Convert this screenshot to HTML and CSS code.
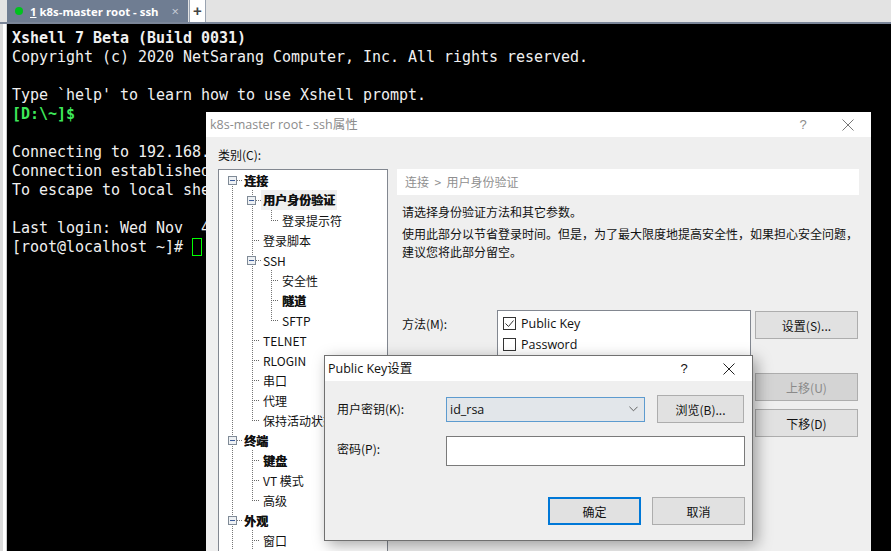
FILE: index.html
```html
<!DOCTYPE html>
<html lang="zh">
<head>
<meta charset="utf-8">
<title>Xshell</title>
<link rel="stylesheet" href="styles.css">
</head>
<body>
<div class="app">
  <div class="tabbar">
    <div class="tab"><span class="dot"></span><span class="tab-title"><u>1</u> k8s-master root - ssh</span><span class="tab-x">×</span></div>
    <div class="tab-add">+</div>
  </div>
  <div class="main">
    <div class="rail"></div>
    <div class="term">
      <div class="ln b">Xshell 7 Beta (Build 0031)</div>
      <div class="ln">Copyright (c) 2020 NetSarang Computer, Inc. All rights reserved.</div>
      <div class="ln">&nbsp;</div>
      <div class="ln">Type `help' to learn how to use Xshell prompt.</div>
      <div class="ln b g">[D:\~]$</div>
      <div class="ln">&nbsp;</div>
      <div class="ln">Connecting to 192.168.1.1:22...</div>
      <div class="ln">Connection established.</div>
      <div class="ln">To escape to local shell, press 'Ctrl+Alt+]'.</div>
      <div class="ln">&nbsp;</div>
      <div class="ln">Last login: Wed Nov  4 10:12:33 2020</div>
      <div class="ln">[root@localhost ~]# <span class="cursor"></span></div>
    </div>
  </div>

  <section class="win props">
    <header class="titlebar dim">
      <span class="title">k8s-master root - ssh属性</span>
      <span class="help">?</span>
      <svg class="close" viewBox="0 0 12 12"><path d="M.5.5l11 11M11.5.5l-11 11"/></svg>
    </header>
    <div class="props-body">
      <div class="cat">
        <div class="cat-label">类别(C):</div>
        <div class="tree">
          <div class="node l0 first b"><i class="box"></i><span>连接</span></div>
          <div class="node l1 b sel"><i class="box"></i><span>用户身份验证</span></div>
          <div class="node l2 end"><i class="dots"></i><span>登录提示符</span></div>
          <div class="node l1"><i class="dots"></i><span>登录脚本</span></div>
          <div class="node l1"><i class="box"></i><span>SSH</span></div>
          <div class="node l2"><i class="dots"></i><span>安全性</span></div>
          <div class="node l2 b"><i class="dots"></i><span>隧道</span></div>
          <div class="node l2 end"><i class="dots"></i><span>SFTP</span></div>
          <div class="node l1"><i class="dots"></i><span>TELNET</span></div>
          <div class="node l1"><i class="dots"></i><span>RLOGIN</span></div>
          <div class="node l1"><i class="dots"></i><span>串口</span></div>
          <div class="node l1"><i class="dots"></i><span>代理</span></div>
          <div class="node l1 end"><i class="dots"></i><span>保持活动状态</span></div>
          <div class="node l0 b"><i class="box"></i><span>终端</span></div>
          <div class="node l1 b"><i class="dots"></i><span>键盘</span></div>
          <div class="node l1"><i class="dots"></i><span>VT 模式</span></div>
          <div class="node l1 end"><i class="dots"></i><span>高级</span></div>
          <div class="node l0 b"><i class="box"></i><span>外观</span></div>
          <div class="node l1"><i class="dots"></i><span>窗口</span></div>
        </div>
      </div>
      <div class="pane">
        <div class="crumb">连接&nbsp; &gt; &nbsp;用户身份验证</div>
        <p class="p1">请选择身份验证方法和其它参数。</p>
        <p class="p2">使用此部分以节省登录时间。但是，为了最大限度地提高安全性，如果担心安全问题，<br>建议您将此部分留空。</p>
        <div class="method">
          <div class="method-label">方法(M):</div>
          <div class="listbox">
            <div class="opt"><svg class="chk" viewBox="0 0 13 13"><rect x=".5" y=".5" width="12" height="12"/><path d="M2.5 6.5l3 3 5-6"/></svg>Public Key</div>
            <div class="opt"><svg class="chk" viewBox="0 0 13 13"><rect x=".5" y=".5" width="12" height="12"/></svg>Password</div>
          </div>
          <div class="side">
            <button class="btn">设置(S)...</button>
            <button class="btn off">上移(U)</button>
            <button class="btn">下移(D)</button>
          </div>
        </div>
      </div>
    </div>
  </section>

  <section class="win pk">
    <header class="titlebar">
      <span class="title">Public Key设置</span>
      <span class="help">?</span>
      <svg class="close" viewBox="0 0 12 12"><path d="M.5.5l11 11M11.5.5l-11 11"/></svg>
    </header>
    <div class="pk-body">
      <div class="pk-grid">
        <label class="lab">用户密钥(K):</label>
        <div class="combo"><span>id_rsa</span><svg class="chev" viewBox="0 0 10 6"><path d="M.5.500L5 5 9.500.5"/></svg></div>
        <button class="btn browse">浏览(B)...</button>
        <label class="lab lab-pw">密码(P):</label>
        <div class="input"></div>
      </div>
      <div class="pk-foot">
        <button class="btn act primary">确定</button>
        <button class="btn act">取消</button>
      </div>
    </div>
  </section>
</div>
</body>
</html>
```

FILE: styles.css
```css
* { box-sizing: border-box; }
html, body { margin: 0; height: 100%; overflow: hidden; }
body { font-family: "Liberation Sans", "Noto Sans CJK SC", sans-serif; }
.app { position: relative; width: 891px; height: 551px; overflow: hidden; background: #000; display: flex; flex-direction: column; }

.tabbar { flex: 0 0 24px; display: flex; background: #e3e3e3; padding-left: 7px; border-bottom: 2px solid #7b8699; align-items: stretch; }
.tab { width: 181px; background: #6f7d92; padding-left: 8px; display: flex; align-items: center; color: #fff; font: 700 11.4px "Open Sans", "Noto Sans CJK SC", sans-serif; }
.dot { width: 8px; height: 8px; border-radius: 50%; background: #00c21e; margin-right: 7px; }
.tab-title { flex: 1; white-space: nowrap; }
.tab-x { color: #c8ced8; font-size: 13px; font-weight: 400; margin-right: 9px; }
.tab-add { width: 17px; margin-left: 1px; background: #fff; color: #444; border-left: 1px solid #9aa3b0; border-right: 1px solid #9aa3b0; text-align: center; font: 700 15px/21px "Liberation Sans", sans-serif; }

.main { flex: 1; display: flex; min-height: 0; }
.rail { flex: 0 0 7px; background: #fff; border-left: 3px solid #dcdcdc; border-right: 1px solid #ccc; }
.term { flex: 1; padding: 5px 0 0 5px; background: #000; color: #f0f0f0; font: 15px/19px "DejaVu Sans Mono", monospace; letter-spacing: -.03px; }
.ln { height: 19px; white-space: pre; }
.b { font-weight: 700; }
.g { color: #3ee85a; }
.cursor { display: inline-block; width: 10px; height: 18px; border: 1px solid #00ff00; vertical-align: -4px; }

.win { position: absolute; background: #efefef; display: flex; flex-direction: column; color: #111; font: 12px/18px "Noto Sans CJK SC", sans-serif; }
.props { left: 206px; top: 112px; width: 665px; height: 460px; }
.pk { left: 324px; top: 355px; width: 429px; height: 186px; border: 1px solid #707070; box-shadow: 4px 4px 14px rgba(0,0,0,.35); }

.titlebar { flex: 0 0 25px; background: #fff; display: flex; align-items: center; padding-left: 4px; }
.pk .titlebar { padding-left: 3px; }
.title { flex: 1; font: 12.5px/16px "Open Sans", "Noto Sans CJK SC", sans-serif; }
.titlebar.dim .title { color: #8c8c8c; }
.help { font: 13px/16px "Liberation Sans", sans-serif; width: 20px; text-align: center; margin-right: 29px; }
.titlebar.dim .help { color: #8c8c8c; }
.close { width: 12px; height: 12px; margin-right: 17px; fill: none; stroke: #222; stroke-width: 1; }
.titlebar.dim .close { stroke: #777; }

.props-body { flex: 1; display: flex; min-height: 0; padding-left: 12px; }
.cat { width: 179px; flex: none; }
.cat-label { height: 26px; padding-top: 9px; line-height: 18px; }
.tree { position: relative; width: 170px; margin-top: 6px; height: 500px; background: #fff; border: 1px solid #828790; overflow: hidden; }

.node {
  --v: repeating-linear-gradient(to bottom, #777 0 1px, transparent 1px 2px);
  height: 20px; display: flex; align-items: center; line-height: 17px;
  background-repeat: no-repeat;
  background-image: var(--v), var(--v), var(--v);
  background-size: 1px 20px, 1px 20px, 1px 20px;
  background-position: 13px 0, -9px 0, -9px 0;
}
.node span { padding: 0 1px; white-space: nowrap; background: #fff; }
.node.b span { text-shadow: .4px 0 0 currentColor; }
.node.sel span { background: #efefef; line-height: 20px; padding: 0 2px; margin-left: 5px; }
.l0 { padding-left: 9px; }
.l0.first { background-position: 13px 10px, -9px 0, -9px 0; }
.l1 { padding-left: 28px; background-position: 13px 0, 33px 0, -9px 0; }
.l1.end { background-size: 1px 20px, 1px 10px, 1px 20px; }
.l2 { padding-left: 47px; background-position: 13px 0, 33px 0, 52px 0; }
.l2.end { background-size: 1px 20px, 1px 20px, 1px 10px; }
.box { position: relative; width: 9px; height: 9px; flex: none; border: 1px solid #7f8a96; background: linear-gradient(#3a5a9a,#3a5a9a) center/5px 1px no-repeat, #eef1f4; }
.box::after { content: ""; position: absolute; left: 8px; top: 3px; width: 5px; border-top: 1px dotted #777; }
.box + span { margin-left: 6px; }
.dots { width: 7px; height: 1px; flex: none; border-top: 1px dotted #666; margin: 0 3px 0 5px; }

.pane { flex: 1; padding-right: 12px; min-width: 0; }
.crumb { margin-top: 32px; width: 462px; height: 26px; background: #fff; padding-left: 8px; line-height: 26px; color: #8f8f8f; font-size: 12px; }
.pane p { margin: 0; padding-left: 5px; line-height: 18px; white-space: nowrap; font-size: 12px; }
.p1 { margin-top: 8px !important; }
.p2 { margin-top: 4px !important; }
.method { margin-top: 49px; display: flex; }
.method-label { width: 100px; padding: 4px 0 0 5px; line-height: 20px; }
.listbox { width: 254px; height: 150px; background: #fff; border: 1px solid #828790; padding-top: 2px; margin-right: 4px; }
.opt { height: 21px; display: flex; align-items: center; font: 12.5px "Open Sans", sans-serif; padding-left: 5px; }
.chk { width: 13px; height: 13px; margin-right: 5px; fill: #fff; stroke: #333; stroke-width: 1; }
.chk path { fill: none; }
.side { display: flex; flex-direction: column; width: 103px; padding-top: 1px; }
.btn { height: 28px; background: #e1e1e1; border: 1px solid #adadad; color: #111; font: 12px "Noto Sans CJK SC", sans-serif; padding: 0; }
.side .btn:nth-child(2) { margin-top: 34px; }
.side .btn:nth-child(3) { margin-top: 8px; }
.btn.off { background: #d4d4d4; color: #8a8a8a; }

.pk-body { flex: 1; padding: 14px 7px 0 12px; display: flex; flex-direction: column; }
.pk-grid { display: grid; grid-template-columns: 109px 199px 12px 87px; grid-template-rows: 28px 30px; row-gap: 13px; align-items: center; }
.lab { line-height: 18px; grid-column: 1; }
.lab-pw { padding-bottom: 4px; }
.combo { grid-column: 2; height: 25px; background: #e2e6ea; border: 1px solid #5d9bcf; display: flex; align-items: center; justify-content: space-between; padding: 0 3px; font: 12.5px "Open Sans", sans-serif; }
.chev { width: 9px; height: 6px; fill: none; stroke: #555; stroke-width: 1; margin-right: 3px; }
.browse { grid-column: 4; height: 28px; }
.input { grid-column: 2 / 5; width: 299px; height: 30px; background: #fff; border: 1px solid #7a7a7a; }
.pk-foot { margin-top: 31px; display: flex; justify-content: flex-end; gap: 11px; }
.act { width: 93px; height: 28px; }
.primary { border: 2px solid #0078d7; }
```
